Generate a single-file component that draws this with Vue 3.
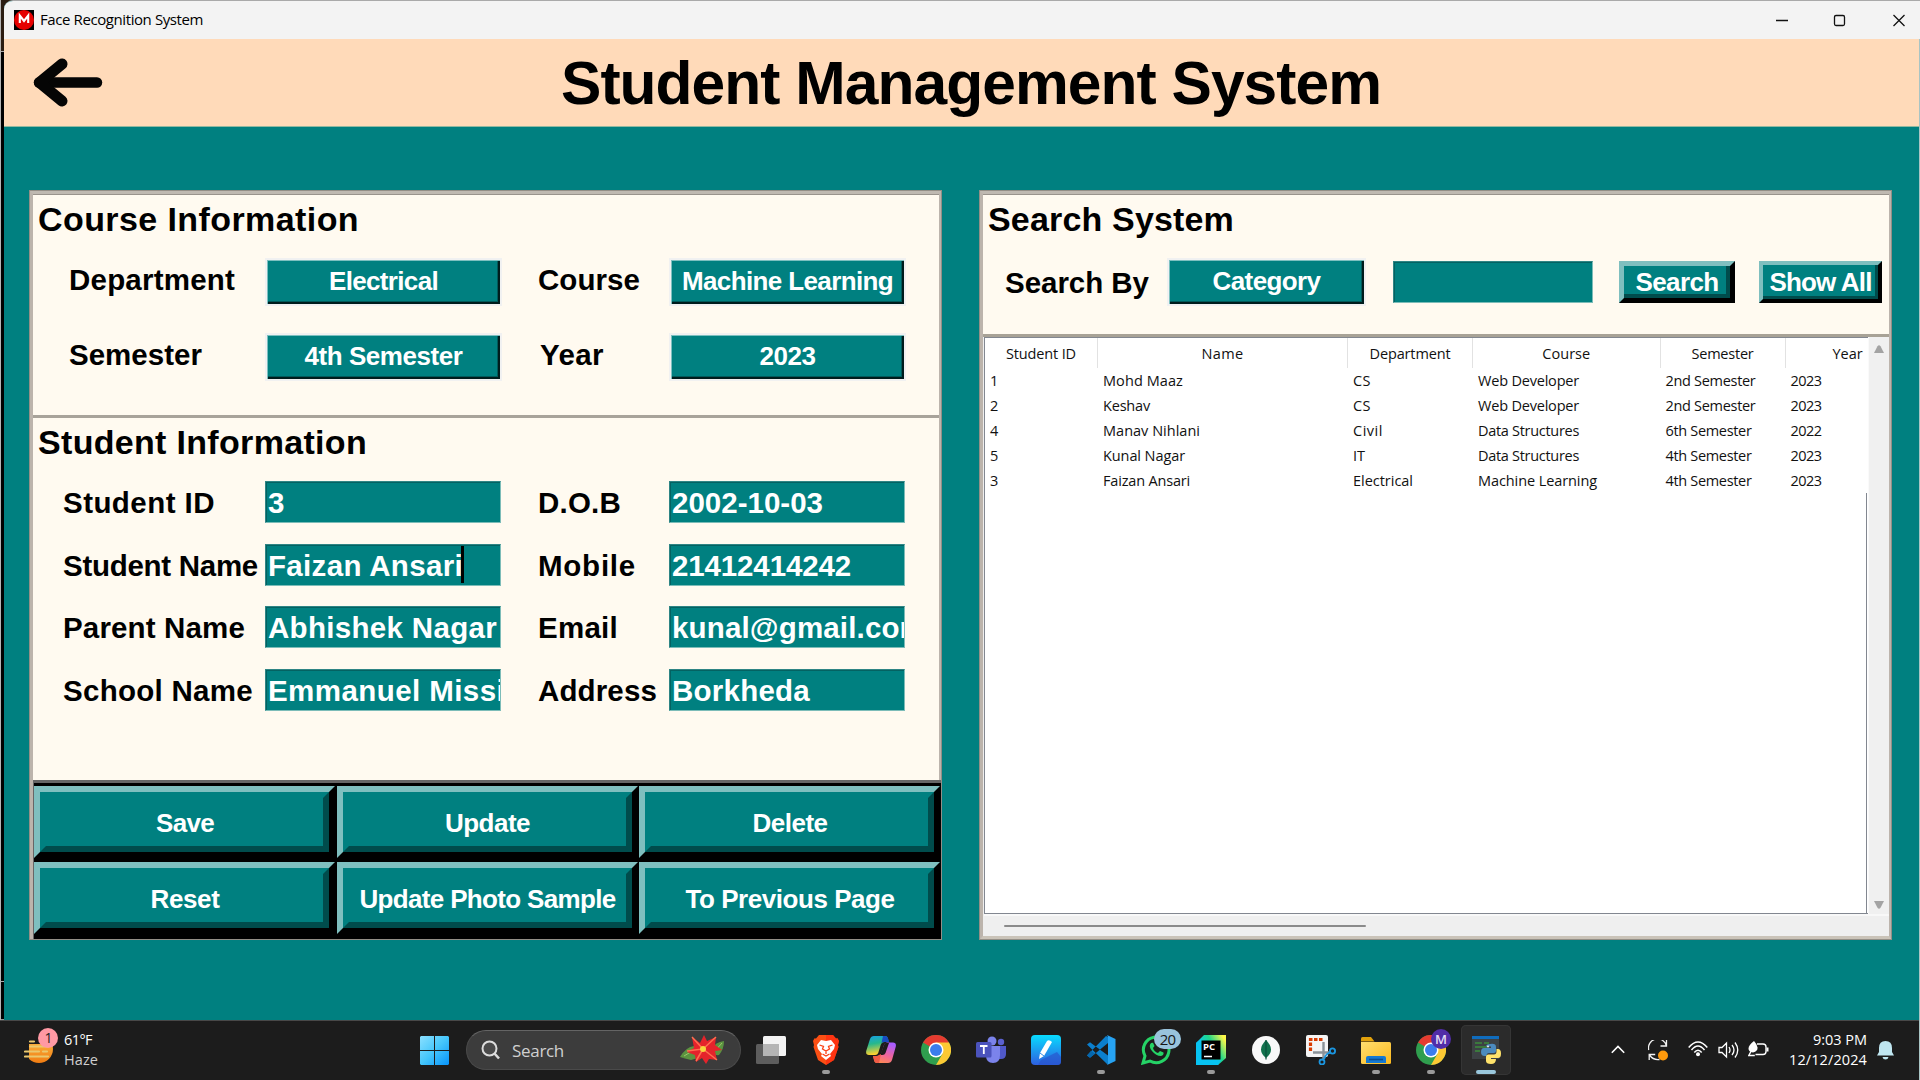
<script setup>
// Spreads or tightens the letters of an element so the text spans the given width.
const vFit = {
  mounted(el, { value }) {
    const w = el.getBoundingClientRect().width
    el.style.letterSpacing = (value - w) / el.textContent.length + 'px'
  }
}

const courseFields = [
  { label: 'Department', lw: 166, value: 'Electrical', vw: 109 },
  { label: 'Course', lw: 102, value: 'Machine Learning', vw: 211 },
  { label: 'Semester', lw: 133, value: '4th Semester', vw: 158 },
  { label: 'Year', lw: 64, value: '2023', vw: 56 }
]

const studentFields = [
  { label: 'Student ID', lw: 152, value: '3', vw: 16 },
  { label: 'D.O.B', lw: 83, value: '2002-10-03', vw: 151 },
  { label: 'Student Name', lw: 195, value: 'Faizan Ansari', vw: 195, caret: true },
  { label: 'Mobile', lw: 98, value: '21412414242', vw: 179 },
  { label: 'Parent Name', lw: 182, value: 'Abhishek Nagar', vw: 229 },
  { label: 'Email', lw: 80, value: 'kunal@gmail.com', vw: 254 },
  { label: 'School Name', lw: 190, value: 'Emmanuel Mission', vw: 274 },
  { label: 'Address', lw: 119, value: 'Borkheda', vw: 138 }
]

const actions = [
  ['Save', 58], ['Update', 85], ['Delete', 75],
  ['Reset', 69], ['Update Photo Sample', 256], ['To Previous Page', 209]
]

const columns = [
  ['Student ID', 70], ['Name', 42], ['Department', 81], ['Course', 48], ['Semester', 62], ['Year', 30]
]

const rows = [
  [['1', 8], ['Mohd Maaz', 80], ['CS', 18], ['Web Developer', 101], ['2nd Semester', 90], ['2023', 31]],
  [['2', 8], ['Keshav', 47], ['CS', 18], ['Web Developer', 101], ['2nd Semester', 90], ['2023', 31]],
  [['4', 8], ['Manav Nihlani', 97], ['Civil', 30], ['Data Structures', 101], ['6th Semester', 86], ['2022', 31]],
  [['5', 8], ['Kunal Nagar', 82], ['IT', 12], ['Data Structures', 101], ['4th Semester', 86], ['2023', 31]],
  [['3', 8], ['Faizan Ansari', 87], ['Electrical', 60], ['Machine Learning', 119], ['4th Semester', 86], ['2023', 31]]
]
</script>

<template>
  <div class="screen">
    <div class="edge"><i></i></div>
    <div class="edge-right"></div>
    <div class="window">
      <header class="titlebar">
        <svg class="appicon" width="20" height="20" viewBox="0 0 20 20"><rect width="20" height="20" fill="#000" /><circle cx="10" cy="10" r="10" fill="#e60000" /><path d="M5.800 13V5.500L10 11l4.200-5.500V13" fill="none" stroke="#fff" stroke-width="2.100" /></svg>
        <span v-fit="163">Face Recognition System</span>
        <svg class="controls" width="140" height="39" viewBox="0 0 140 39" fill="none" stroke="#111" stroke-width="1.300">
          <path d="M6 19.500h12" /><rect x="64.500" y="14.500" width="10" height="10" rx="1.500" /><path d="M123.500 14l11 11m0-11l-11 11" />
        </svg>
      </header>

      <div class="banner">
        <svg class="back" width="70" height="50" viewBox="0 0 70 50" fill="none" stroke="#050505" stroke-linecap="round" stroke-linejoin="round"><path d="M6 24.500H64" stroke-width="10.500" /><path d="M29 6L6.500 24.500L29 43" stroke-width="11" /></svg>
        <h1><span v-fit="820">Student Management System</span></h1>
      </div>

      <main>
        <section class="panel left">
          <div class="course">
            <h2><span v-fit="321">Course Information</span></h2>
            <div class="course-grid">
              <template v-for="f in courseFields" :key="f.label">
                <label :class="{ year: f.label === 'Year' }"><span v-fit="f.lw">{{ f.label }}</span></label>
                <div class="select"><span v-fit="f.vw">{{ f.value }}</span></div>
              </template>
            </div>
          </div>
          <div class="student">
            <h2><span v-fit="329">Student Information</span></h2>
            <div class="student-grid">
              <template v-for="f in studentFields" :key="f.label">
                <label><span v-fit="f.lw">{{ f.label }}</span></label>
                <div class="entry"><span v-fit="f.vw">{{ f.value }}</span><i v-if="f.caret" class="caret"></i></div>
              </template>
            </div>
          </div>
          <div class="actions">
            <button v-for="a in actions" :key="a[0]" class="bevel"><span class="inner"><span v-fit="a[1]">{{ a[0] }}</span></span></button>
          </div>
        </section>

        <section class="panel right">
          <div class="search">
            <h2><span v-fit="246">Search System</span></h2>
            <div class="search-row">
              <label><span v-fit="144">Search By</span></label>
              <div class="select category"><span v-fit="108">Category</span></div>
              <div class="entry query"></div>
              <button class="bevel find"><span class="inner"><span v-fit="83">Search</span></span></button>
              <button class="bevel all"><span class="inner"><span v-fit="102">Show All</span></span></button>
            </div>
          </div>
          <div class="results">
            <div class="table">
              <div class="tr head"><div v-for="c in columns" :key="c[0]" class="td"><span v-fit="c[1]">{{ c[0] }}</span></div></div>
              <div v-for="(r, i) in rows" :key="i" class="tr"><div v-for="(c, j) in r" :key="j" class="td"><span v-fit="c[1]">{{ c[0] }}</span></div></div>
              <div class="rest"></div>
            </div>
            <div class="vscroll">
              <svg width="10" height="8"><path d="M0 8L3.500 1.200Q5-.8 6.500 1.200L10 8z" fill="#a3a3a3" /></svg>
              <svg width="10" height="8"><path d="M0 0L3.500 6.800Q5 8.800 6.500 6.800L10 0z" fill="#a3a3a3" /></svg>
            </div>
            <div class="hscroll"><i></i></div>
          </div>
        </section>
      </main>
    </div>

    <footer class="taskbar">
      <div class="weather">
        <svg width="36" height="46" viewBox="0 0 36 46">
          <defs><linearGradient id="sun" x1="0" y1="0" x2="0" y2="1"><stop offset="0" stop-color="#ffc04a" /><stop offset="1" stop-color="#f07c12" /></linearGradient></defs>
          <circle cx="15" cy="22" r="14" fill="url(#sun)" /><path d="M0 6h30v11H0z" fill="#1c1c1c" /><path d="M0 17h5v16H0z" fill="#1c1c1c" />
          <path d="M6 14.500h4M6 19.500h17M1 24.500h14M19 24.500h4M1 29.500h23" stroke="#eac86e" stroke-width="2.200" stroke-linecap="round" />
          <circle cx="24" cy="11" r="10" fill="#ff99a4" /><text x="24.500" y="16" text-anchor="middle" font-size="14" fill="#222">1</text>
        </svg>
        <div class="wtext"><span v-fit="28">61°F</span><span v-fit="34" class="dim">Haze</span></div>
      </div>

      <div class="apps">
        <svg class="start" width="29" height="29" viewBox="0 0 29 29"><defs><linearGradient id="win" x1="0" y1="0" x2="1" y2="1"><stop offset="0" stop-color="#8be0ff" /><stop offset=".5" stop-color="#45c6fb" /><stop offset="1" stop-color="#0793fa" /></linearGradient></defs><path d="M1 0h13v14H0V1zM15 0h13l1 1v13H15zM0 15h14v14H1l-1-1zM15 15h14v13l-1 1H15z" fill="url(#win)" /></svg>
        <div class="searchbox">
          <svg width="20" height="20" viewBox="0 0 20 20" fill="none" stroke="#dcdcdc" stroke-width="2"><circle cx="8.500" cy="8.500" r="7" fill="#4a4a4a" /><path d="M13.500 13.500L18 18.500" stroke-width="2.600" /></svg>
          <span v-fit="52">Search</span>
          <svg class="flower" width="46" height="30" viewBox="0 0 46 30">
            <path d="M1 22Q7 12 15 11Q17 20 12 22Q6 24 1 22zM45 6Q36 7 33 14Q33 21 40 20Q45 14 45 6zM4 23l9-9 6 9-7 2z" fill="#5c9440" /><path d="M5 21l10-6M43 8L35 17" stroke="#9cc56c" />
            <path d="M13 2l8 6 4-8 3 6 9-4-1 8 7 5-7 1 2 9-8-1-3 5-4-6-6 4-1-7-8-3 7-4z" fill="#e5232b" /><path d="M13 2l11 12L8 16M24 14L37 2M24 14l14 11M24 14l-7 12" stroke="#ff6f50" fill="none" stroke-width="1.500" /><circle cx="24" cy="14" r="3" fill="#f7d53d" />
          </svg>
        </div>

        <div class="app taskview"><svg width="30" height="30" viewBox="0 0 30 30"><rect x="0" y="9" width="23" height="20" rx="1.500" fill="#5d5d5d" /><rect x="7" y="1" width="23" height="20" rx="1.500" fill="#f3f3f3" /><path d="M7 9h16v12H7z" fill="#b5b5b5" /></svg></div>

        <div class="app run"><svg width="30" height="30" viewBox="0 0 30 30"><path d="M8 0h14l3 3.500 1.500-.3L28 6l-1 4 .5 2-4.500 13-8 5-8-5L2.500 12 3 10 2 6l1.500-2.800L5 3.500z" fill="#fb4f14" /><path d="M15 0h7l3 3.500 1.500-.3L28 6l-1 4 .5 2-4.500 13-8 5z" fill="#ff2a10" opacity=".7" /><path d="M10 5l5 1 5-1 4 5-1 4-4 5 1 2-5 4-5-4 1-2-4-5-1-4z" fill="#fff" /><path d="M8.500 10l4 1.500-1 2.500 3.500 2 3.500-2-1-2.500 4-1.500M15 16v3M11.500 19L15 21l3.500-2" fill="none" stroke="#fb4214" stroke-width="1.300" /></svg></div>

        <div class="app"><svg width="30" height="30" viewBox="0 0 30 30"><defs><linearGradient id="c1" x1="0" y1="0" x2=".2" y2="1"><stop offset="0" stop-color="#16a0e8" /><stop offset=".45" stop-color="#26b88c" /><stop offset="1" stop-color="#ffd22e" /></linearGradient><linearGradient id="c2" x1=".6" y1="0" x2=".2" y2="1"><stop offset="0" stop-color="#a95cff" /><stop offset=".55" stop-color="#f06599" /><stop offset="1" stop-color="#ff8d4a" /></linearGradient></defs><path d="M8 1h11q2.500 0 3 3l.7 3h-4q-3 0-4 3l-2.500 8q-.8 2-3 2H3q-3.500 0-2.800-4L4 4q1-3 4-3z" fill="url(#c1)" /><path d="M17 1h2q2.500 0 3.300 3l.7 3h-5q-1.500 0-2.500 1z" fill="#174bc2" /><path d="M22 28H11q-2.500 0-3-3l-1-4h4.500q3 0 4-3L18 10q.8-2.500 3-2.500h6q3.500 0 2.800 4L26 25q-1 3-4 3z" fill="url(#c2)" /><path d="M14.500 19.500L18 10q.5-1.500 1.500-2h3.500l-3.500 10q-.8 2-3 2h-2z" fill="#1c1c1c" /><path d="M7 21h4l4-2-2 9h-2q-2.500 0-3-3z" fill="#ef5b46" /></svg></div>

        <div class="app"><svg width="30" height="30" viewBox="0 0 30 30"><circle cx="15" cy="15" r="15" fill="#2f9e4e" /><path d="M15 15L2 7.500A15 15 0 0 1 28 7.500z" fill="#e53b30" /><path d="M28 7.500H15l6.500 11.300L15 30A15 15 0 0 0 28 7.500z" fill="#fcc934" /><circle cx="15" cy="15" r="7.500" fill="#fff" /><circle cx="15" cy="15" r="6" fill="#3b7ded" /></svg></div>

        <div class="app"><svg width="30" height="30" viewBox="0 0 30 30"><circle cx="25" cy="7" r="3.200" fill="#5b61cf" /><circle cx="16" cy="6" r="4.500" fill="#7b83eb" /><path d="M21 11h9v8q0 5-5 5h-4z" fill="#5059c9" /><path d="M10 11h14v9q0 8-7 8t-7-8z" fill="#7b83eb" /><rect y="7" width="15.500" height="15.500" rx="1.500" fill="#4b53bc" /><path d="M4 11h7.500M7.800 11v8" stroke="#fff" stroke-width="1.800" /></svg></div>

        <div class="app"><svg width="30" height="30" viewBox="0 0 30 30"><defs><linearGradient id="jr" x1="0" y1="0" x2="0" y2="1"><stop offset="0" stop-color="#08dcff" /><stop offset="1" stop-color="#2e5fe0" /></linearGradient></defs><rect width="30" height="30" rx="4" fill="url(#jr)" /><path d="M10 25l16-8 4 5v5q0 3-3 3H7z" fill="#2853cb" opacity=".65" /><path d="M8 24l1-6 7-12q2-2 5 1l-8 14z" fill="#fff" /><path d="M9 18l4 3" stroke="#318ae4" /></svg></div>

        <div class="app run"><svg width="30" height="30" viewBox="0 0 30 30"><path d="M1 9.500l3-2.200L24 22v6l-3 1zM1 20.500l3 2.200L22 8V2l-2-1z" fill="#0b7fcd" /><path d="M1 20.500l3 2.200 5-4-4-3z" fill="#0667ad" /><path d="M21 0l8.500 4v22L21 30l1-2V2z" fill="#27a3f3" /></svg></div>

        <div class="app"><svg width="30" height="30" viewBox="0 0 30 30" fill="none"><path d="M2 28l2-7A12.800 12.800 0 1 1 9 26z" stroke="#25d366" stroke-width="3" /><path d="M10 8q-3 3 1 8t9 5q3-1 2.500-3.500L19 16l-2 2q-4-1.500-5-5l1.500-2-1.500-3.300z" fill="#25d366" /></svg><b class="badge">20</b></div>

        <div class="app run"><svg width="30" height="30" viewBox="0 0 30 30"><defs><linearGradient id="pc" x1="0" y1=".6" x2="1" y2="0"><stop offset=".2" stop-color="#08c8f5" /><stop offset=".55" stop-color="#21d789" /><stop offset=".9" stop-color="#fcf84a" /></linearGradient></defs><path d="M8 0h22v23l-8 7H0V8z" fill="url(#pc)" /><path d="M0 8l5-4v26H0zM5 25h20l-3 5H5z" fill="#07c3f2" /><rect x="5.500" y="5.500" width="19" height="19" fill="#000" /><text x="7" y="15" font-size="9.500" font-weight="bold" fill="#fff" font-family="Open Sans, sans-serif">PC</text><path d="M8 21.500h8" stroke="#fff" stroke-width="1.500" /></svg></div>

        <div class="app"><svg width="30" height="30" viewBox="0 0 30 30"><circle cx="15" cy="15" r="14" fill="#f8f8f8" /><path d="M15 5q10 10 0 18q-10-8 0-18z" fill="#11724d" /><path d="M15 5v19.500" stroke="#0b4f3c" stroke-width="1.200" /></svg></div>

        <div class="app"><svg width="30" height="30" viewBox="0 0 30 30"><rect width="22" height="22" rx="2" fill="#f5f5f5" /><path d="M4.500 16V4.500H18" fill="none" stroke="#d83b01" stroke-width="3.200" stroke-dasharray="3.500 1.500" /><path d="M17.500 7v17M7 17.500h17" stroke="#8b9298" stroke-width="2.400" /><g fill="none" stroke="#1b96e0" stroke-width="1.800"><circle cx="26.500" cy="16" r="2.600" /><circle cx="16" cy="27" r="2.500" /><path d="M20 20l4-3M18 24l2-4" /></g></svg></div>

        <div class="app run"><svg width="30" height="30" viewBox="0 0 30 30"><defs><linearGradient id="fo" x1="0" y1="0" x2="1" y2="1"><stop offset="0" stop-color="#ffdf70" /><stop offset="1" stop-color="#fcb91d" /></linearGradient></defs><path d="M0 3.500Q0 2 1.500 2H10l3.500 4.500H0z" fill="#e2a20c" /><path d="M0 7h28.500q1.500 0 1.500 1.500v19q0 1.500-1.500 1.500h-27Q0 29 0 27.500z" fill="url(#fo)" /><path d="M5 28v-5q0-2 2-2h16q2 0 2 2v5z" fill="#1579d2" /><path d="M8 24.500h14" stroke="#0a4f93" stroke-width="1.600" /></svg></div>

        <div class="app run"><svg width="30" height="30" viewBox="0 0 30 30"><circle cx="15" cy="15" r="15" fill="#2f9e4e" /><path d="M15 15L2 7.500A15 15 0 0 1 28 7.500z" fill="#e53b30" /><path d="M28 7.500H15l6.500 11.300L15 30A15 15 0 0 0 28 7.500z" fill="#fcc934" /><circle cx="15" cy="15" r="7.500" fill="#fff" /><circle cx="15" cy="15" r="6" fill="#3b7ded" /></svg><b class="badge profile">M</b></div>

        <div class="app run active"><svg width="30" height="30" viewBox="0 0 30 30"><path d="M1 1h27v23H1z" fill="#3c4144" /><path d="M1 1h27v3H1z" fill="#0f6cbd" /><path d="M4 8h7M13 8h5M4 12h12M4 16h5" stroke="#3b8c3b" stroke-width="1.400" /><path d="M19 9q6-1 6 3v4q0 2-2 2h-5q-2.500 0-2.500 3h-2q-3.500 0-3.500-4t3-4h7v-1.500h-5Q15 9 19 9z" fill="#4b8bbe" /><path d="M20 29q-5 0-5-3v-4q0-2.500 2.500-2.500H23q2.500 0 2.500-3v-2.500h1.500q3 0 3 4.500t-3 4.500h-7v1h5q0 5-5 5z" fill="#ffe36b" /><circle cx="17" cy="11.500" r=".9" fill="#fff" /></svg></div>
      </div>

      <div class="tray">
        <svg class="chev" width="14" height="9" viewBox="0 0 14 9" fill="none" stroke="#fff" stroke-width="1.600"><path d="M.8 7.800L7 1.500l6.200 6.300" /></svg>
        <svg class="sync" width="20" height="21" viewBox="0 0 20 21" fill="none" stroke="#f2f2f2" stroke-width="1.300"><path d="M.7 10A9 9 0 0 1 18.500 6M18.500 0v6h-6M1.200 20v-5.500h6M1.500 15q4 5.500 10 4.500" /><circle cx="15" cy="15.500" r="5" fill="#ff9a0c" stroke="none" /></svg>
        <svg class="wifi" width="20" height="16" viewBox="0 0 20 16" fill="none" stroke="#fff" stroke-width="1.500"><path d="M.7 6.500Q10-4.500 19.300 6.500M3.500 9Q10 1 16.500 9M6.300 11.500Q10 6.800 13.700 11.500" /><circle cx="10" cy="13.300" r="2" fill="#fff" stroke="none" /></svg>
        <svg class="vol" width="21" height="18" viewBox="0 0 21 18" fill="none" stroke="#fff" stroke-width="1.300"><path d="M1 6.500h3L8.500 2v14L4 11.500H1zM11 6q2 3 0 6M14 4q4 5 0 10M17 1.500q5.500 7.500 0 15" /></svg>
        <svg class="bat" width="21" height="18" viewBox="0 0 21 18" fill="none" stroke="#fff" stroke-width="1.400"><path d="M9 4h6q3 0 3 3v4.500q0 3-3 3H7.500" /><path d="M19.500 7.500v4" stroke-width="2" /><path d="M6 1q3 3 3.500 6.500T5 12.500Q.5 12 .5 8.500T6 1z" fill="#fff" stroke="none" /><path d="M6 6L.8 15.500h6" /></svg>
        <div class="clock"><span v-fit="54">9:03 PM</span><span v-fit="78">12/12/2024</span></div>
        <svg class="bell" width="17" height="20" viewBox="0 0 17 20" fill="#bfe6f0"><path d="M2 8Q2 1 8.500 1T15 8v4l2 3.500H0L2 12zM5.500 17h6q-.5 2.500-3 2.500t-3-2.500z" /></svg>
      </div>
    </footer>
  </div>
</template>

<style>
body { margin: 0; overflow: hidden; }
</style>

<style scoped>
* { box-sizing: border-box; }
.screen { position: relative; width: 1920px; height: 1080px; overflow: hidden; background: #000; display: flex; flex-direction: column; font-family: "Liberation Sans", Arial, sans-serif; }
.screen span { display: inline-block; white-space: nowrap; }
.edge { position: absolute; left: 0; top: 0; width: 12px; height: 1020px; background: linear-gradient(#2b1d12 0 51px, #aaa 51px 52px, #000 52px 981px, #aaa 981px 982px, #000 982px 1019px, #999 1019px); border-left: 1px solid #b5b5b5; }
.edge-right { position: absolute; z-index: 2; right: 0; top: 39px; width: 1px; height: 1041px; background: #a8c4c4; }
.window { position: relative; margin-left: 4px; height: 1020px; background: #008080; border-top: 1px solid #a9a9a9; border-radius: 9px 0 0 0; overflow: hidden; display: flex; flex-direction: column; }
.titlebar { height: 38px; flex: none; background: #f3f3f3; display: flex; align-items: center; padding-left: 10px; color: #000; font: 15px/36px "Open Sans", sans-serif; }
.titlebar > span { height: 38px; }
.appicon { margin-right: 6px; margin-top: -1px; }
.controls { margin-left: auto; margin-right: 10px; }
.banner { height: 88px; flex: none; background: #ffdab9; border-bottom: 1px solid #93b9a0; display: flex; align-items: center; }
.back { margin-left: 29px; flex: none; margin-top: 1px; }
h1 { margin: 0 0 0 458px; font-size: 60.500px; line-height: 86px; color: #000; }
main { display: flex; padding: 63px 0 0 25px; gap: 37px; }
.panel { width: 913px; height: 750px; border: 4px solid #bcb4ac; border-top-color: #bfb9b1; border-right-width: 3px; border-bottom: 0; box-shadow: inset 0 1px #99938c; outline: 1px solid #938e86; outline-offset: -1px; background: #fffaf0; }
h2 { margin: 0; font-size: 34px; line-height: 40px; color: #000; padding-left: 5px; }
label { font-weight: bold; font-size: 29.500px; line-height: 42px; color: #000; white-space: nowrap; }
.course { height: 224px; padding-top: 5px; border-bottom: 3px solid #a8a39a; }
.course-grid { display: grid; grid-template-columns: 197px 237px 35px 132px 237px; margin: 19px 0 0 35px; row-gap: 27px; }
.course-grid label { padding: 1px 0 0 1px; }
.course-grid label:nth-of-type(even) { grid-column: 4; }
.course-grid .year { padding-left: 3px; }
.select { height: 48px; border: 2px solid #f1f1f1; background: #008080; box-shadow: inset 1px 1px #7dc0c0, inset -2px -2px #001c1c, inset -3px -3px #005a5a; color: #fff; font-weight: bold; font-size: 26px; line-height: 43px; text-align: center; overflow: hidden; }
.student { height: 362px; padding-top: 4px; }
.student-grid { display: grid; grid-template-columns: 202px 236px 37px 131px 236px; margin: 19px 0 0 30px; row-gap: 20.600px; }
.student-grid label { height: 42px; padding-top: 1px; }
.student-grid label:nth-of-type(even) { grid-column: 4; }
.entry { height: 42px; background: #008080; border: 1px solid #2e8585; border-bottom-color: #7cbcb8; border-right-color: #7cbcb8; box-shadow: inset 1px 1px #046262; color: #fff; font-weight: bold; font-size: 29.500px; line-height: 41px; padding-left: 2px; white-space: nowrap; overflow: hidden; display: flex; }
.caret { width: 2.500px; height: 37px; margin: 1px 0 0 -2px; background: #000; flex: none; }
.actions { height: 160px; background: #000; border-top: 3px solid #666; border-left: 1px solid #666; margin-right: -2px; display: grid; grid-template-columns: repeat(3, 301px); column-gap: 1.500px; grid-auto-rows: 72px; row-gap: 4px; padding-top: 3px; overflow: hidden; }
.bevel { padding: 0; margin: 0; display: block; background: #008080; border: 6px solid; border-color: #7fbfbf #000 #000 #7fbfbf; border-radius: 0; font: bold 26px/1 "Liberation Sans", Arial, sans-serif; color: #fff; }
.inner { width: 100%; height: 100%; border: 6px solid; border-color: #008080 #004c4c #004c4c #008080; }
.bevel .inner { display: flex; align-items: center; justify-content: center; }
.actions .inner { padding: 2px 0 0 1px; }
.search { height: 143px; border-bottom: 3px solid #a8a296; padding-top: 5px; }
.search-row { display: flex; align-items: center; margin: 19px 0 0 22px; height: 48px; }
.search-row label { width: 162px; padding-top: 2px; }
.category { width: 199px; }
.query { width: 200px; margin-left: 27px; }
.find { width: 116px; height: 42px; margin-left: 26px; border-width: 5px; }
.find .inner { border-width: 0 4px 4px 0; padding-left: 4px; padding-top: 3px; }
.all { width: 123px; height: 42px; margin-left: 24px; border-width: 4px; }
.all .inner { border-width: 0 3px 3px 0; padding-left: 3px; padding-top: 3px; }
.results { height: 599px; background: #efefef; display: grid; grid-template-columns: 884px 1fr; grid-template-rows: 577px 1fr; padding-left: 1px; }
.table { display: flex; flex-direction: column; background: #fff; border-top: 1px solid #828790; border-left: 1px solid #828790; border-bottom: 1px solid #828790; font: 14.500px/25px "Open Sans", sans-serif; color: #111; overflow: hidden; }
.tr { display: grid; grid-template-columns: 113px 250px 125px 187.500px 125px 125px; height: 25px; flex: none; }
.td { padding-left: 5px; }
.head { height: 30px; line-height: 31px; }
.head .td { text-align: center; padding: 0; border-right: 1px solid #e2e2e2; height: 30px; }
.rest { flex: 1; border-right: 1px solid #828790; margin-right: 1px; }
.vscroll { background: #f0f0f0; display: flex; flex-direction: column; justify-content: space-between; align-items: center; padding: 8px 1px 5px 0; border-left: 1px solid #fafafa; }
.hscroll { grid-column: 1 / 3; border-top: 2px solid #f8f8f8; padding: 9px 0 0 20px; }
.hscroll i { display: block; width: 362px; height: 2px; background: #8a8a8a; border-radius: 1px; }
.right { border-bottom: 4px solid #cac3b8; }

.taskbar { height: 60px; background: #1c1c1c; border-top: 1px solid #484848; display: flex; font-family: "Open Sans", sans-serif; color: #fff; }
.weather { display: flex; padding: 6px 0 0 24px; width: 420px; flex: none; }
.wtext { display: flex; flex-direction: column; align-items: flex-start; padding: 3px 0 0 4px; font-size: 14.500px; line-height: 20px; }
.dim { color: #cfcfcf; }
.apps { display: flex; align-items: flex-start; width: 1191px; flex: none; }
.start { margin-top: 15px; flex: none; }
.searchbox { margin: 9px 0 0 17px; width: 275px; height: 40px; border-radius: 20px; background: #3c3c3c; border: 1px solid #4a4a4a; border-top-color: #646464; display: flex; align-items: center; padding: 0 15px 0 14px; color: #d0d0d0; font-size: 17px; flex: none; }
.searchbox span { margin-left: 11px; }
.flower { margin-left: auto; }
.app { position: relative; width: 50px; height: 50px; margin: 4px 0 0 5px; padding: 10px; border-radius: 5px; flex: none; }
.taskview { margin-left: 5px; }
.app svg { display: block; }
.run::after { content: ""; position: absolute; left: 21px; bottom: 1px; width: 8px; height: 4px; border-radius: 2px; background: #9a9a9a; }
.active { background: #2b2b2b; box-shadow: inset 0 0 0 1px #353535; }
.active::after { left: 15px; width: 20px; background: #99c7dc; }
.badge { position: absolute; left: 23px; top: 4px; width: 27px; height: 20px; border-radius: 10px; background: #99c3dc; color: #151515; font: 15px/20px "Open Sans", sans-serif; text-align: center; letter-spacing: -.8px; }
.profile { left: 25px; width: 20px; background: #512da8; color: #e4dcf5; font-size: 13px; letter-spacing: 0; font-weight: 600; }
.tray { display: flex; align-items: flex-start; }
.chev { margin-top: 24px; }
.sync { margin: 19px 0 0 23px; }
.wifi { margin: 20px 0 0 20px; }
.vol { margin: 20px 0 0 10px; }
.bat { margin: 19px 0 0 9px; }
.clock { width: 98px; display: flex; flex-direction: column; align-items: flex-end; font-size: 14.500px; line-height: 20px; padding-top: 9px; }
.bell { margin: 19px 0 0 10px; }
</style>
